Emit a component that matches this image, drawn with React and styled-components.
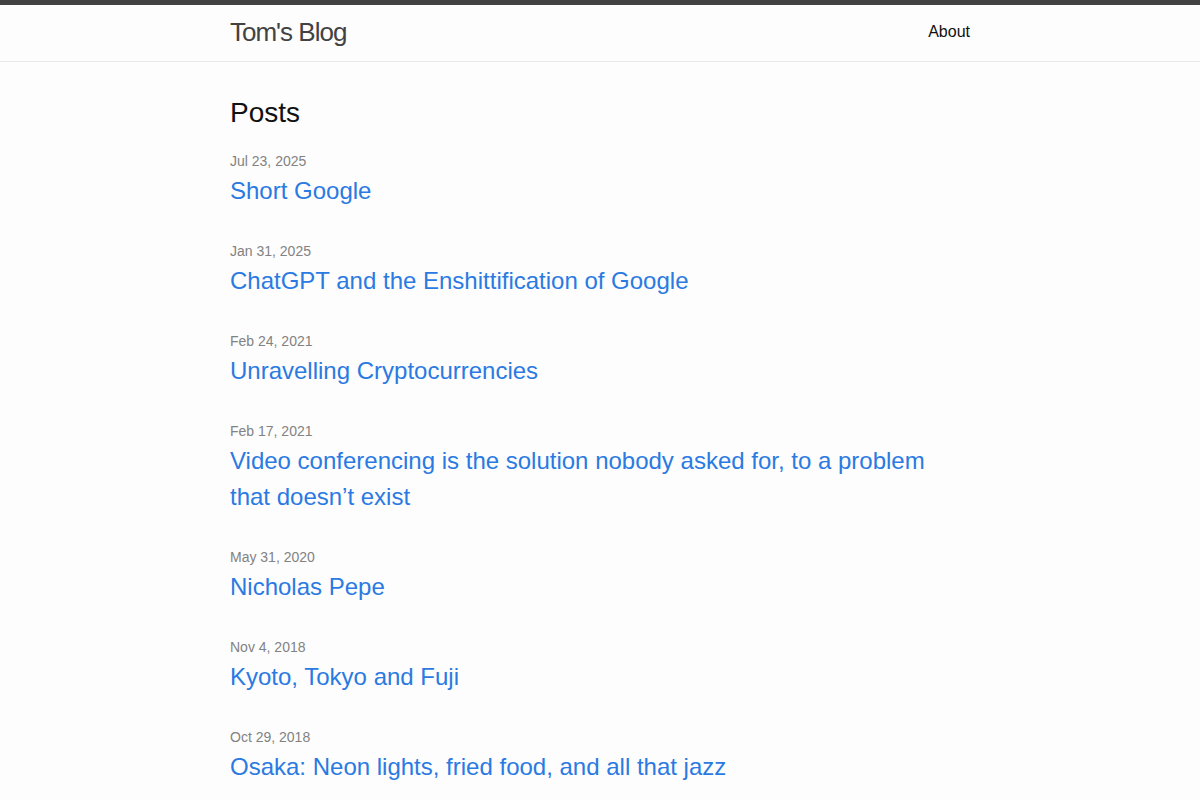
import React from 'react';
import styled, { createGlobalStyle } from 'styled-components';

const GlobalStyle = createGlobalStyle`
  html, body {
    margin: 0;
    padding: 0;
  }
  body {
    background-color: #fdfdfd;
    color: #111111;
    font: 400 16px/1.5 "Liberation Sans", Helvetica, Arial, sans-serif;
  }
`;

const Header = styled.header`
  border-top: 5px solid #424242;
  border-bottom: 1px solid #e8e8e8;
  min-height: 56px;
`;

const Wrapper = styled.div`
  max-width: 740px;
  margin: 0 auto;
  padding: 0 30px;
`;

const HeaderRow = styled(Wrapper)`
  display: flex;
  justify-content: space-between;
  align-items: flex-start;
`;

const SiteTitle = styled.a`
  font-size: 26px;
  font-weight: 300;
  line-height: 54px;
  letter-spacing: -1px;
  color: #424242;
  text-decoration: none;
`;

const NavLink = styled.a`
  font-size: 16px;
  line-height: 54px;
  color: #111111;
  text-decoration: none;
`;

const Main = styled.main`
  padding: 30px 0;
`;

const Heading = styled.h2`
  font-size: 28px;
  font-weight: 400;
  line-height: 42px;
  margin: 0 0 15px;
`;

const PostList = styled.ul`
  list-style: none;
  margin: 0;
  padding: 0;
`;

const PostItem = styled.li`
  margin-bottom: 30px;
`;

const PostMeta = styled.span`
  display: block;
  font-size: 14px;
  line-height: 24px;
  color: #828282;
`;

const PostTitle = styled.h3`
  margin: 0;
  font-size: 24px;
  font-weight: 400;
  line-height: 36px;
`;

const PostLink = styled.a`
  color: #2a7ae2;
  text-decoration: none;
`;

const posts = [
  { date: 'Jul 23, 2025', title: 'Short Google' },
  { date: 'Jan 31, 2025', title: 'ChatGPT and the Enshittification of Google' },
  { date: 'Feb 24, 2021', title: 'Unravelling Cryptocurrencies' },
  {
    date: 'Feb 17, 2021',
    title: 'Video conferencing is the solution nobody asked for, to a problem that doesn\u2019t exist',
  },
  { date: 'May 31, 2020', title: 'Nicholas Pepe' },
  { date: 'Nov 4, 2018', title: 'Kyoto, Tokyo and Fuji' },
  { date: 'Oct 29, 2018', title: 'Osaka: Neon lights, fried food, and all that jazz' },
];

const App = () => {
  return (
    <>
      <GlobalStyle />
      <Header>
        <HeaderRow>
          <SiteTitle href="#">Tom's Blog</SiteTitle>
          <NavLink href="#">About</NavLink>
        </HeaderRow>
      </Header>
      <Main>
        <Wrapper>
          <Heading>Posts</Heading>
          <PostList>
            {posts.map((post) => (
              <PostItem key={post.title}>
                <PostMeta>{post.date}</PostMeta>
                <PostTitle>
                  <PostLink href="#">{post.title}</PostLink>
                </PostTitle>
              </PostItem>
            ))}
          </PostList>
        </Wrapper>
      </Main>
    </>
  );
};

export default App;
